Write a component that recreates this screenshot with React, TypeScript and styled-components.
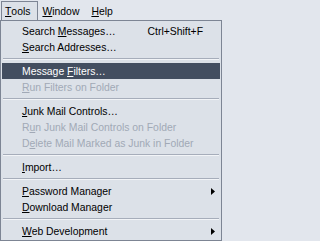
import React from "react";
import styled, { createGlobalStyle } from "styled-components";

const Global = createGlobalStyle`
  html, body { margin: 0; padding: 0; background: #e2e6ed; }
  body { font-family: "Liberation Sans", Arial, sans-serif; font-size: 10.4px; color: #000; }
  * { box-sizing: border-box; }
`;

const Page = styled.div`
  width: 224px;
  height: 241px;
  overflow: hidden;
  display: flex;
  flex-direction: column;
`;

const MenuBar = styled.div`
  height: 20px;
  display: flex;
  align-items: flex-end;
  padding-left: 1px;
  background: #e2e6ed;
`;

const BarItem = styled.div<{ $active?: boolean }>`
  height: 19px;
  display: flex;
  align-items: center;
  padding: 0 7px 0 3px;
  border: 1px solid ${(p) => (p.$active ? "#7d8594" : "transparent")};
  border-bottom: none;
  background: ${(p) => (p.$active ? "#dce1e8" : "transparent")};
`;

const Dropdown = styled.div`
  width: 222px;
  border: 1px solid #7d8594;
  background: #dce1e8;
  padding: 2px 1px 1px 1px;
  display: flex;
  flex-direction: column;
`;

const Item = styled.div<{ $disabled?: boolean; $hover?: boolean }>`
  height: 16px;
  display: grid;
  grid-template-columns: 1fr auto 17px;
  align-items: center;
  padding-left: 20px;
  white-space: nowrap;
  color: ${(p) => (p.$hover ? "#ffffff" : p.$disabled ? "#a1a9b6" : "#000000")};
  background: ${(p) => (p.$hover ? "#434e60" : "transparent")};
`;

const Shortcut = styled.span``;

const ArrowCell = styled.span`
  display: flex;
  justify-content: flex-end;
  padding-right: 5px;
`;

const Separator = styled.div`
  height: 8px;
  padding: 3px 1px 0 1px;
  &::before {
    content: "";
    display: block;
    height: 1px;
    background: #a6adba;
    border-bottom: 1px solid #f2f4f7;
    box-sizing: content-box;
  }
`;

const U = styled.span`
  text-decoration: underline;
  text-underline-offset: 1px;
`;

const Arrow = () => (
  <svg width="4" height="7" viewBox="0 0 4 7">
    <path d="M0 0 L4 3.5 L0 7 Z" fill="#000" />
  </svg>
);

type Entry =
  | { sep: true }
  | { pre?: string; key: string; post: string; shortcut?: string; sub?: boolean; disabled?: boolean; hover?: boolean; sep?: false };

const entries: Entry[] = [
  { pre: "Search ", key: "M", post: "essages…", shortcut: "Ctrl+Shift+F" },
  { key: "S", post: "earch Addresses…" },
  { sep: true },
  { pre: "Message ", key: "F", post: "ilters…", hover: true },
  { key: "R", post: "un Filters on Folder", disabled: true },
  { sep: true },
  { key: "J", post: "unk Mail Controls…" },
  { pre: "R", key: "u", post: "n Junk Mail Controls on Folder", disabled: true },
  { pre: "D", key: "e", post: "lete Mail Marked as Junk in Folder", disabled: true },
  { sep: true },
  { key: "I", post: "mport…" },
  { sep: true },
  { key: "P", post: "assword Manager", sub: true },
  { key: "D", post: "ownload Manager" },
  { sep: true },
  { key: "W", post: "eb Development", sub: true },
];

export default function App() {
  return (
    <Page>
      <Global />
      <MenuBar>
        <BarItem $active>
          <U>T</U>ools
        </BarItem>
        <BarItem>
          <U>W</U>indow
        </BarItem>
        <BarItem>
          <U>H</U>elp
        </BarItem>
      </MenuBar>
      <Dropdown>
        {entries.map((e, i) =>
          e.sep ? (
            <Separator key={i} />
          ) : (
            <Item key={i} $disabled={e.disabled} $hover={e.hover}>
              <span>
                {e.pre}
                <U>{e.key}</U>
                {e.post}
              </span>
              <Shortcut>{e.shortcut}</Shortcut>
              <ArrowCell>{e.sub ? <Arrow /> : null}</ArrowCell>
            </Item>
          )
        )}
      </Dropdown>
    </Page>
  );
}
